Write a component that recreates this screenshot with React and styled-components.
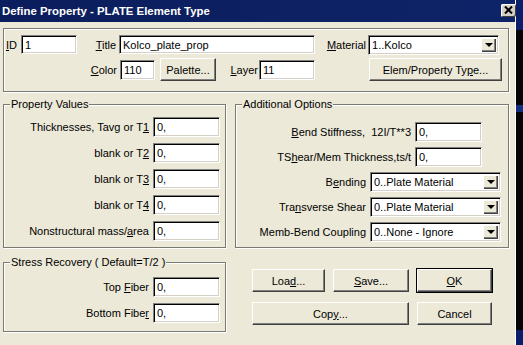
import React from 'react';
import styled, { createGlobalStyle } from 'styled-components';

const GlobalStyle = createGlobalStyle`
  html, body {
    margin: 0;
    padding: 0;
    background: #0a0a0a;
  }
  body {
    font-family: "Liberation Sans", Arial, sans-serif;
    font-size: 11px;
    color: #000;
  }
`;

const Screen = styled.div`
  display: flex;
  width: 523px;
  height: 345px;
  overflow: hidden;
`;

const Window = styled.div`
  display: flex;
  flex-direction: column;
  width: 515px;
  height: 345px;
  background: #ece9d8;
  border-right: 1px solid #fff;
`;

const Desktop = styled.div`
  flex: 1;
  background: linear-gradient(
    to bottom,
    #0a1e6a 0,
    #0a1e6a 30px,
    #050505 30px,
    #050505 105px,
    #123080 105px,
    #123080 112px,
    #050505 112px,
    #050505 330px,
    #0a1e6a 330px
  );
`;

const TitleBar = styled.div`
  display: flex;
  align-items: center;
  justify-content: space-between;
  height: 22px;
  padding: 0 0 0 2px;
  background: linear-gradient(to right, #0b1d5c, #0e2468);
  color: #fff;
  font-weight: bold;
  font-size: 11.4px;
`;

const CloseButton = styled.div`
  display: flex;
  align-items: center;
  justify-content: center;
  width: 15px;
  height: 13px;
  margin: -2px -1px 0 0;
  background: #d4d0c8;
  border-radius: 2px;
  box-shadow: inset 1px 1px 0 #fff, inset -1px -1px 0 #404040;
`;

const Body = styled.div`
  display: flex;
  flex-direction: column;
  padding: 6px 0 0 3px;
`;

const Group = styled.div`
  position: relative;
  display: flex;
  flex-direction: column;
  gap: ${p => p.$gap || 6}px;
  width: ${p => p.$w}px;
  height: ${p => p.$h}px;
  margin-top: ${p => p.$mt || 0}px;
  padding-top: ${p => p.$pt || 0}px;
  box-sizing: border-box;
  border: 1px solid #7b7a72;
  box-shadow: 1px 1px 0 #fff, inset 1px 1px 0 #fff;
`;

const Caption = styled.span`
  position: absolute;
  top: -8px;
  left: 6px;
  padding: 0 1px;
  background: #ece9d8;
  line-height: 14px;
`;

const Row = styled.div`
  display: flex;
  align-items: center;
  height: ${p => p.$h || 20}px;
  margin-top: ${p => p.$mt || 0}px;
  padding-left: ${p => p.$pl || 0}px;
`;

const FormRow = styled.div`
  display: flex;
  align-items: center;
  justify-content: flex-end;
  gap: 4px;
  height: 20px;
  padding-right: ${p => p.$pr || 5}px;
  white-space: pre;
`;

const Label = styled.span`
  display: inline-block;
  width: ${p => (p.$w ? `${p.$w}px` : 'auto')};
  padding-right: ${p => p.$pr || 0}px;
  text-align: right;
  box-sizing: border-box;
  white-space: pre;
`;

const Mn = styled.u`
  text-decoration: underline;
  text-underline-offset: 1px;
`;

const Field = styled.div`
  width: ${p => p.$w}px;
  height: ${p => p.$h || 19}px;
  box-sizing: border-box;
  margin-left: ${p => p.$ml || 0}px;
  padding: 2px 0 0 3px;
  background: #fff;
  border-top: 1px solid #808080;
  border-left: 1px solid #808080;
  border-right: 1px solid #fff;
  border-bottom: 1px solid #fff;
  box-shadow: inset 1px 1px 0 #000, inset -1px -1px 0 #d4d0c8;
  line-height: 14px;
  white-space: nowrap;
  overflow: hidden;
`;

const Combo = styled(Field)`
  display: flex;
  justify-content: space-between;
  padding: 2px 2px 2px 3px;
`;

const DropButton = styled.div`
  display: flex;
  align-items: center;
  justify-content: center;
  width: 15px;
  height: 14px;
  background: #ece9d8;
  box-shadow: inset 1px 1px 0 #fff, inset -1px -1px 0 #404040, inset -2px -2px 0 #808080;
`;

const Arrow = styled.span`
  width: 0;
  height: 0;
  border-left: 4px solid transparent;
  border-right: 4px solid transparent;
  border-top: 4px solid #000;
`;

const Button = styled.div`
  display: flex;
  align-items: center;
  justify-content: center;
  width: ${p => p.$w}px;
  height: 23px;
  margin-left: ${p => p.$ml || 0}px;
  box-sizing: border-box;
  grid-column: ${p => p.$span || 'auto'};
  background: #ece9d8;
  border-top: 1px solid #fff;
  border-left: 1px solid #fff;
  border-right: 1px solid #404040;
  border-bottom: 1px solid #404040;
  box-shadow: inset -1px -1px 0 #808080;
  outline: ${p => (p.$default ? '1px solid #000' : 'none')};
`;

const Columns = styled.div`
  display: flex;
  gap: 9px;
  margin-top: 12px;
`;

const Column = styled.div`
  display: flex;
  flex-direction: column;
`;

const ButtonGrid = styled.div`
  display: grid;
  grid-template-columns: 73px 76px 75px;
  column-gap: 8px;
  row-gap: 10px;
  margin-top: 21px;
  padding-left: 17px;
`;

const ComboBox = ({ w, children }) => (
  <Combo $w={w} $h={20}>
    <span>{children}</span>
    <DropButton>
      <Arrow />
    </DropButton>
  </Combo>
);

const propertyRows = [
  <>Thicknesses, Tavg or T<Mn>1</Mn></>,
  <>blank or T<Mn>2</Mn></>,
  <>blank or T<Mn>3</Mn></>,
  <>blank or T<Mn>4</Mn></>,
  <>Nonstructural mass/<Mn>a</Mn>rea</>,
];

const App = () => (
  <Screen>
    <GlobalStyle />
    <Window>
      <TitleBar>
        <span>Define Property - PLATE Element Type</span>
        <CloseButton>
          <svg width="9" height="8" viewBox="0 0 9 8">
            <path d="M1 0.5 L8 7.5 M8 0.5 L1 7.5" stroke="#000" strokeWidth="2" />
          </svg>
        </CloseButton>
      </TitleBar>
      <Body>
        <Group $w={506} $h={64} $pt={6} $gap={4}>
          <Row $h={19} $pl={2}>
            <Label $pr={4}><Mn>I</Mn>D</Label>
            <Field $w={56}>1</Field>
            <Label $w={42} $pr={3}><Mn>T</Mn>itle</Label>
            <Field $w={196}>Kolco_plate_prop</Field>
            <Label $w={53} $pr={2}><Mn>M</Mn>aterial</Label>
            <ComboBox w={131}>1..Kolco</ComboBox>
          </Row>
          <Row $h={23}>
            <Label $w={116} $pr={3}><Mn>C</Mn>olor</Label>
            <Field $w={35} $h={20}>110</Field>
            <Button $w={56} $ml={5}>Palette...</Button>
            <Label $w={43} $pr={1}><Mn>L</Mn>ayer</Label>
            <Field $w={56} $h={20}>11</Field>
            <Button $w={133} $ml={54}>Elem/Property Ty<Mn>p</Mn>e...</Button>
          </Row>
        </Group>

        <Columns>
          <Column>
            <Group $w={223} $h={144} $pt={12}>
              <Caption>Property Values</Caption>
              {propertyRows.map((label, i) => (
                <FormRow key={i}>
                  <Label>{label}</Label>
                  <Field $w={67} $h={20}>0,</Field>
                </FormRow>
              ))}
            </Group>
            <Group $w={223} $h={70} $mt={14} $pt={14}>
              <Caption>Stress Recovery ( Default=T/2 )</Caption>
              <FormRow>
                <Label>Top <Mn>F</Mn>iber</Label>
                <Field $w={67} $h={20}>0,</Field>
              </FormRow>
              <FormRow>
                <Label>Bottom Fibe<Mn>r</Mn></Label>
                <Field $w={67} $h={20}>0,</Field>
              </FormRow>
            </Group>
          </Column>

          <Column>
            <Group $w={274} $h={144} $pt={17} $gap={5}>
              <Caption>Additional Options</Caption>
              <FormRow $pr={26}>
                <Label><Mn>B</Mn>end Stiffness,  12I/T**3</Label>
                <Field $w={67} $h={20}>0,</Field>
              </FormRow>
              <FormRow $pr={26}>
                <Label>TS<Mn>h</Mn>ear/Mem Thickness,ts/t</Label>
                <Field $w={67} $h={20}>0,</Field>
              </FormRow>
              <FormRow $pr={7}>
                <Label>B<Mn>e</Mn>nding</Label>
                <ComboBox w={131}>0..Plate Material</ComboBox>
              </FormRow>
              <FormRow $pr={7}>
                <Label>Tra<Mn>n</Mn>sverse Shear</Label>
                <ComboBox w={131}>0..Plate Material</ComboBox>
              </FormRow>
              <FormRow $pr={7}>
                <Label>Memb-Bend Coupling</Label>
                <ComboBox w={131}>0..None - Ignore</ComboBox>
              </FormRow>
            </Group>
            <ButtonGrid>
              <Button $w={73}>Loa<Mn>d</Mn>...</Button>
              <Button $w={76}><Mn>S</Mn>ave...</Button>
              <Button $w={75} $default><Mn>O</Mn>K</Button>
              <Button $w={157} $span="span 2">Cop<Mn>y</Mn>...</Button>
              <Button $w={75}>Cancel</Button>
            </ButtonGrid>
          </Column>
        </Columns>
      </Body>
    </Window>
    <Desktop />
  </Screen>
);

export default App;
